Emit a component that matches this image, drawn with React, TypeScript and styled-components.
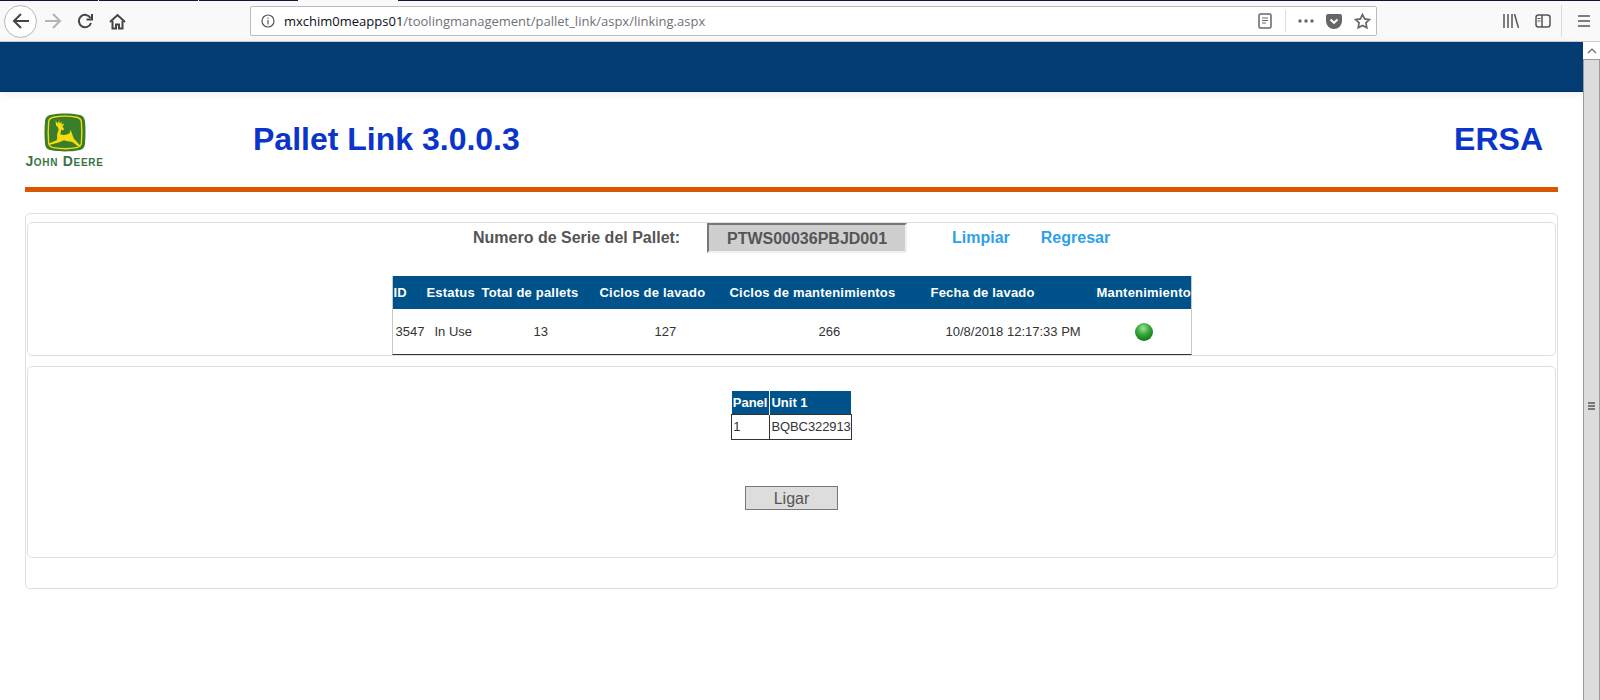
import React from "react";
import styled, { createGlobalStyle } from "styled-components";

const mainColumns = [
  { label: "ID", width: 32, headInset: 1, value: "3547", inset: 3 },
  { label: "Estatus", width: 51, headInset: 2, value: "In Use", inset: 10 },
  { label: "Total de pallets", width: 107, headInset: 6, value: "13", inset: 58 },
  { label: "Ciclos de lavado", width: 138, headInset: 17, value: "127", inset: 72 },
  { label: "Ciclos de mantenimientos", width: 180, headInset: 9, value: "266", inset: 98 },
  { label: "Fecha de lavado", width: 164, headInset: 30, value: "10/8/2018 12:17:33 PM", inset: 45 },
  { label: "Mantenimiento", width: 126, headInset: 32, value: "", inset: 70 },
];

const App = () => {
  return (
    <Shell>
      <GlobalStyle />
      <TabStrip>
        <TabEdge $width={98} />
        <TabEdge $width={99} />
        <TabEdge $width={99} />
        <TabGap />
        <TabEdge $grow />
      </TabStrip>
      <Toolbar>
        <BackButton>
          <svg width="20" height="20" viewBox="0 0 20 20" fill="none" stroke="#444" strokeWidth="2">
            <path d="M18 10H3M10 3l-7 7 7 7" />
          </svg>
        </BackButton>
        <ToolSlot>
          <svg width="18" height="16" viewBox="0 0 18 16" fill="none" stroke="#b4b4b4" strokeWidth="2">
            <path d="M1 8h15M9 1l7 7-7 7" />
          </svg>
        </ToolSlot>
        <ToolSlot>
          <svg width="16" height="16" viewBox="0 0 16 16" fill="none" stroke="#444" strokeWidth="2">
            <path d="M13.5 5A6.2 6.2 0 1 0 14 10" />
            <path d="M15 1v5.500H9.500" fill="none" />
          </svg>
        </ToolSlot>
        <ToolSlot>
          <svg width="17" height="17" viewBox="0 0 17 17" fill="none" stroke="#444" strokeWidth="2">
            <path d="M1 9l7.500-7L16 9" />
            <path d="M3.500 8v7.500h3.500v-4h3v4h3.500V8" />
          </svg>
        </ToolSlot>
        <UrlBar>
          <InfoIcon>
            <svg width="14" height="14" viewBox="0 0 14 14" fill="none" stroke="#555" strokeWidth="1.2">
              <circle cx="7" cy="7" r="6" />
              <path d="M7 6v4.500M7 3.400v1.400" />
            </svg>
          </InfoIcon>
          <UrlText>
            mxchim0meapps01<UrlPath>/toolingmanagement/pallet_link/aspx/linking.aspx</UrlPath>
          </UrlText>
          <UrlIcon>
            <svg width="14" height="16" viewBox="0 0 14 16" fill="none" stroke="#666" strokeWidth="1.500">
              <rect x="1" y="1" width="12" height="14" rx="1.500" />
              <path d="M4 5h6M4 7.500h6M4 10h4" strokeWidth="1" />
            </svg>
          </UrlIcon>
          <UrlDivider />
          <UrlIcon>
            <svg width="16" height="4" viewBox="0 0 16 4" fill="#666">
              <circle cx="2" cy="2" r="1.700" />
              <circle cx="8" cy="2" r="1.700" />
              <circle cx="14" cy="2" r="1.700" />
            </svg>
          </UrlIcon>
          <UrlIcon>
            <svg width="16" height="15" viewBox="0 0 16 15">
              <path d="M2 0h12a2 2 0 0 1 2 2v5a8 8 0 0 1-16 0V2a2 2 0 0 1 2-2z" fill="#666" />
              <path d="M4.500 5.500L8 8.800l3.500-3.300" fill="none" stroke="#fff" strokeWidth="2" />
            </svg>
          </UrlIcon>
          <UrlIcon>
            <svg width="17" height="16" viewBox="0 0 17 16" fill="none" stroke="#666" strokeWidth="1.700">
              <path d="M8.500 1.500l2.100 4.400 4.800.7-3.500 3.300.9 4.800-4.300-2.300-4.300 2.300.9-4.800L1.600 6.600l4.800-.7z" />
            </svg>
          </UrlIcon>
        </UrlBar>
        <ToolSpacer />
        <ToolSlot>
          <svg width="16" height="14" viewBox="0 0 16 14" fill="none" stroke="#555" strokeWidth="1.500">
            <path d="M1 0v14M5 0v14M9 0v14M11.500 0l4 14" />
          </svg>
        </ToolSlot>
        <ToolSlot>
          <svg width="16" height="14" viewBox="0 0 16 14" fill="none" stroke="#555" strokeWidth="1.500">
            <rect x="1" y="1" width="14" height="12" rx="2.500" />
            <path d="M7 1v12" />
            <path d="M2.500 4.500h3M2.500 7h3" strokeWidth="1" />
          </svg>
        </ToolSlot>
        <ToolDivider />
        <ToolSlot>
          <svg width="14" height="12" viewBox="0 0 14 12" fill="none" stroke="#555" strokeWidth="1.700">
            <path d="M1 1h12M1 6h12M1 11h12" />
          </svg>
        </ToolSlot>
      </Toolbar>
      <Viewport>
        <Page>
          <Band />
          <Header>
            <LogoBlock>
              <svg width="42" height="40" viewBox="0 0 40 38">
                <path d="M7 1.500C14 0 26 0 33 1.500c4 .8 5.500 2.500 6 6 .7 7 .7 15 0 22-.5 3.500-2 5.200-6 6-7 1.500-19 1.500-26 0-4-.8-5.500-2.500-6-6-.7-7-.7-15 0-22 .5-3.500 2-5.200 6-6z" fill="#3a7d2a" />
                <path d="M9 4C15 2.900 25 2.900 31 4c3 .6 4.300 1.800 4.600 4.500.5 6 .5 14 0 20-.3 2.700-1.600 3.900-4.600 4.500-6 1.100-16 1.100-22 0-3-.6-4.300-1.800-4.600-4.500-.5-6-.5-14 0-20C4.700 5.800 6 4.600 9 4z" fill="none" stroke="#f7dc10" strokeWidth="1.300" />
                <path d="M11 7l2 3 1.500-3 .5 3 2-2-.5 3 3-1-2 3 1.500 1.500-.5 2-2-.5-1 4c2.500 1.500 6.500 1 9-1l.5-3 1.500 3c.5 2 1.500 4 2 5.500l6 6.500-1.500 1-6-4.500c-3-.5-6-.5-8-1.500l-5 2-9 2.500-.5-1.500 7.500-3 .5-2 0-4 1.500-4-1-3-1.500-1z" fill="#f7dc10" />
              </svg>
              <LogoWord>John Deere</LogoWord>
            </LogoBlock>
            <Title>Pallet Link 3.0.0.3</Title>
            <Plant>ERSA</Plant>
          </Header>
          <Rule />
          <OuterPanel>
            <TopPanel>
              <SerialRow>
                <SerialLabel>Numero de Serie del Pallet:</SerialLabel>
                <SerialValue>PTWS00036PBJD001</SerialValue>
                <ActionLink $first>Limpiar</ActionLink>
                <ActionLink>Regresar</ActionLink>
              </SerialRow>
              <MainTable>
                <colgroup>
                  {mainColumns.map((col) => (
                    <col key={col.label} width={col.width} />
                  ))}
                </colgroup>
                <thead>
                  <tr>
                    {mainColumns.map((col) => (
                      <MainHead key={col.label} $inset={col.headInset}>
                        {col.label}
                      </MainHead>
                    ))}
                  </tr>
                </thead>
                <tbody>
                  <tr>
                    {mainColumns.map((col) => (
                      <MainCell key={col.label} $inset={col.inset}>
                        {col.value || <StatusLight />}
                      </MainCell>
                    ))}
                  </tr>
                </tbody>
              </MainTable>
            </TopPanel>
            <BottomPanel>
              <UnitTable>
                <thead>
                  <tr>
                    <UnitHead>Panel</UnitHead>
                    <UnitHead>Unit 1</UnitHead>
                  </tr>
                </thead>
                <tbody>
                  <tr>
                    <UnitCell>1</UnitCell>
                    <UnitCell>BQBC322913</UnitCell>
                  </tr>
                </tbody>
              </UnitTable>
              <LinkButton>Ligar</LinkButton>
            </BottomPanel>
          </OuterPanel>
        </Page>
        <ScrollTrack>
          <ScrollUp>
            <svg width="10" height="6" viewBox="0 0 10 6" fill="none" stroke="#666" strokeWidth="1.200">
              <path d="M1 5l4-4 4 4" />
            </svg>
          </ScrollUp>
          <ScrollThumb>
            <Grip />
          </ScrollThumb>
        </ScrollTrack>
      </Viewport>
    </Shell>
  );
};

export default App;

const GlobalStyle = createGlobalStyle`
  html, body {
    margin: 0;
    padding: 0;
    background: #fff;
    overflow: hidden;
  }
  * {
    box-sizing: border-box;
  }
`;

const Shell = styled.div`
  width: 1600px;
  height: 700px;
  display: flex;
  flex-direction: column;
  overflow: hidden;
  font-family: "Liberation Sans", Arial, sans-serif;
`;

const TabStrip = styled.div`
  height: 1px;
  flex: none;
  display: flex;
  gap: 1px;
  background: #f9f9fa;
`;

const TabEdge = styled.div<{ $width?: number; $grow?: boolean }>`
  width: ${(p) => (p.$width ? `${p.$width}px` : "auto")};
  flex: ${(p) => (p.$grow ? 1 : "none")};
  background: #14143a;
`;

const TabGap = styled.div`
  width: 98px;
`;

const Toolbar = styled.div`
  height: 41px;
  flex: none;
  display: flex;
  align-items: center;
  padding-left: 4px;
  background: #f9f9fa;
  border-bottom: 1px solid #cfcfd1;
`;

const BackButton = styled.div`
  width: 33px;
  height: 33px;
  border: 1px solid #b5b5b5;
  border-radius: 50%;
  background: #fff;
  display: flex;
  align-items: center;
  justify-content: center;
`;

const ToolSlot = styled.div`
  width: 32px;
  height: 32px;
  flex: none;
  display: flex;
  align-items: center;
  justify-content: center;
`;

const UrlBar = styled.div`
  width: 1127px;
  height: 30px;
  margin-left: 117px;
  display: flex;
  align-items: center;
  background: #fff;
  border: 1px solid #bcbcbc;
  border-radius: 2px;
`;

const InfoIcon = styled.div`
  width: 33px;
  display: flex;
  justify-content: center;
  padding-left: 1px;
`;

const UrlText = styled.div`
  flex: 1;
  font-family: "Open Sans", sans-serif;
  font-size: 13px;
  color: #0c0c20;
  white-space: nowrap;
`;

const UrlPath = styled.span`
  color: #70707a;
`;

const UrlIcon = styled.div`
  width: 28px;
  display: flex;
  justify-content: center;
`;

const UrlDivider = styled.div`
  width: 1px;
  height: 22px;
  margin: 0 6px;
  background: #dcdcdc;
`;

const ToolSpacer = styled.div`
  flex: 1;
`;

const ToolDivider = styled.div`
  width: 1px;
  height: 32px;
  margin: 0 6px 0 2px;
  background: #dcdcdc;
`;

const Viewport = styled.div`
  flex: 1;
  display: flex;
  min-height: 0;
`;

const Page = styled.div`
  flex: 1;
  min-width: 0;
  background: #fff;
`;

const Band = styled.div`
  height: 50px;
  background: #033c73;
  border-bottom: 1px solid #02305c;
  box-shadow: 0 2px 8px rgba(0, 0, 0, 0.08);
`;

const Header = styled.div`
  height: 95px;
  display: flex;
  align-items: center;
  padding: 0 40px 0 25px;
`;

const LogoBlock = styled.div`
  width: 79px;
  margin-top: 1px;
  display: flex;
  flex-direction: column;
  align-items: center;
  flex: none;
`;

const LogoWord = styled.div`
  font-family: "Liberation Sans", sans-serif;
  font-size: 14px;
  font-weight: bold;
  line-height: 11px;
  margin-top: 3px;
  font-variant: small-caps;
  letter-spacing: 0.7px;
  color: #3a7544;
  white-space: nowrap;
`;

const Title = styled.h1`
  margin: 0 0 0 149px;
  font-size: 32px;
  font-weight: bold;
  color: #0b35c9;
  flex: 1;
`;

const Plant = styled.div`
  font-size: 32px;
  font-weight: bold;
  color: #0b35c9;
`;

const Rule = styled.div`
  height: 5px;
  margin: 0 25px;
  background: #d95700;
`;

const OuterPanel = styled.div`
  margin: 21px 25px 0;
  height: 376px;
  padding: 8px 1px 0;
  border: 1px solid #e0e0e0;
  border-radius: 5px;
`;

const TopPanel = styled.div`
  height: 134px;
  border: 1px solid #e0e0e0;
  border-radius: 5px;
  display: flex;
  flex-direction: column;
  align-items: center;
`;

const SerialRow = styled.div`
  display: flex;
  align-items: center;
  height: 30px;
  width: 100%;
  padding-left: 445px;
  font-size: 16px;
  font-weight: bold;
`;

const SerialLabel = styled.div`
  color: #555;
  width: 234px;
  white-space: nowrap;
`;

const SerialValue = styled.div`
  width: 200px;
  height: 30px;
  line-height: 27px;
  text-align: center;
  color: #555;
  background: #cfcfcf;
  border-style: solid;
  border-width: 2px;
  border-color: #777 #f0f0f0 #f0f0f0 #777;
`;

const ActionLink = styled.a<{ $first?: boolean }>`
  color: #2f9fe8;
  margin-left: ${(p) => (p.$first ? "45px" : "31px")};
`;

const MainTable = styled.table`
  width: 798px;
  margin: 23px 0 0 0;
  table-layout: fixed;
  border-collapse: separate;
  border-spacing: 0;
  border-left: 1px solid #c8c8c8;
  border-right: 1px solid #c8c8c8;
  border-bottom: 1px solid #333;
`;

const MainHead = styled.th<{ $inset: number }>`
  height: 33px;
  padding: 0 0 0 ${(p) => p.$inset}px;
  background: #00528a;
  color: #fff;
  font-size: 13px;
  font-weight: bold;
  letter-spacing: 0.2px;
  text-align: left;
  white-space: nowrap;
`;

const MainCell = styled.td<{ $inset: number }>`
  height: 45px;
  padding: 0 0 0 ${(p) => p.$inset}px;
  color: #333;
  font-size: 13px;
  text-align: left;
  white-space: nowrap;
`;

const StatusLight = styled.div`
  width: 18px;
  height: 18px;
  border-radius: 50%;
  background: radial-gradient(circle at 45% 30%, #a4e0a0 0%, #35a835 40%, #0a6a12 90%);
`;

const BottomPanel = styled.div`
  height: 192px;
  margin-top: 10px;
  border: 1px solid #e0e0e0;
  border-radius: 5px;
  display: flex;
  flex-direction: column;
  align-items: center;
  padding-top: 24px;
`;

const UnitTable = styled.table`
  border-collapse: collapse;
`;

const UnitHead = styled.th`
  height: 23px;
  padding: 0 0 0 1px;
  background: #00528a;
  color: #fff;
  font-size: 13px;
  font-weight: bold;
  text-align: left;
  &:first-child {
    padding-right: 2px;
    border-right: 1px solid #fff;
  }
`;

const UnitCell = styled.td`
  height: 25px;
  padding: 0 0 0 1px;
  border: 1px solid #333;
  color: #333;
  font-size: 13px;
  letter-spacing: -0.1px;
`;

const LinkButton = styled.div`
  width: 93px;
  height: 24px;
  margin-top: 46px;
  line-height: 24px;
  text-align: center;
  background: #ddd;
  border: 1px solid #777;
  color: #555;
  font-size: 16px;
`;

const ScrollTrack = styled.div`
  width: 17px;
  flex: none;
  display: flex;
  flex-direction: column;
  overflow: hidden;
  background: #f0f0f0;
`;

const ScrollUp = styled.div`
  height: 17px;
  flex: none;
  display: flex;
  align-items: center;
  justify-content: center;
  background: #fff;
`;

const ScrollThumb = styled.div`
  height: 692px;
  flex: none;
  display: flex;
  align-items: center;
  justify-content: center;
  background: #dcdcdc;
  border-left: 1px solid #9a9a9a;
  border-right: 1px solid #9a9a9a;
  border-top: 1px solid #9a9a9a;
`;

const Grip = styled.div`
  width: 7px;
  height: 8px;
  background: repeating-linear-gradient(#777 0 2px, transparent 2px 3px);
`;
